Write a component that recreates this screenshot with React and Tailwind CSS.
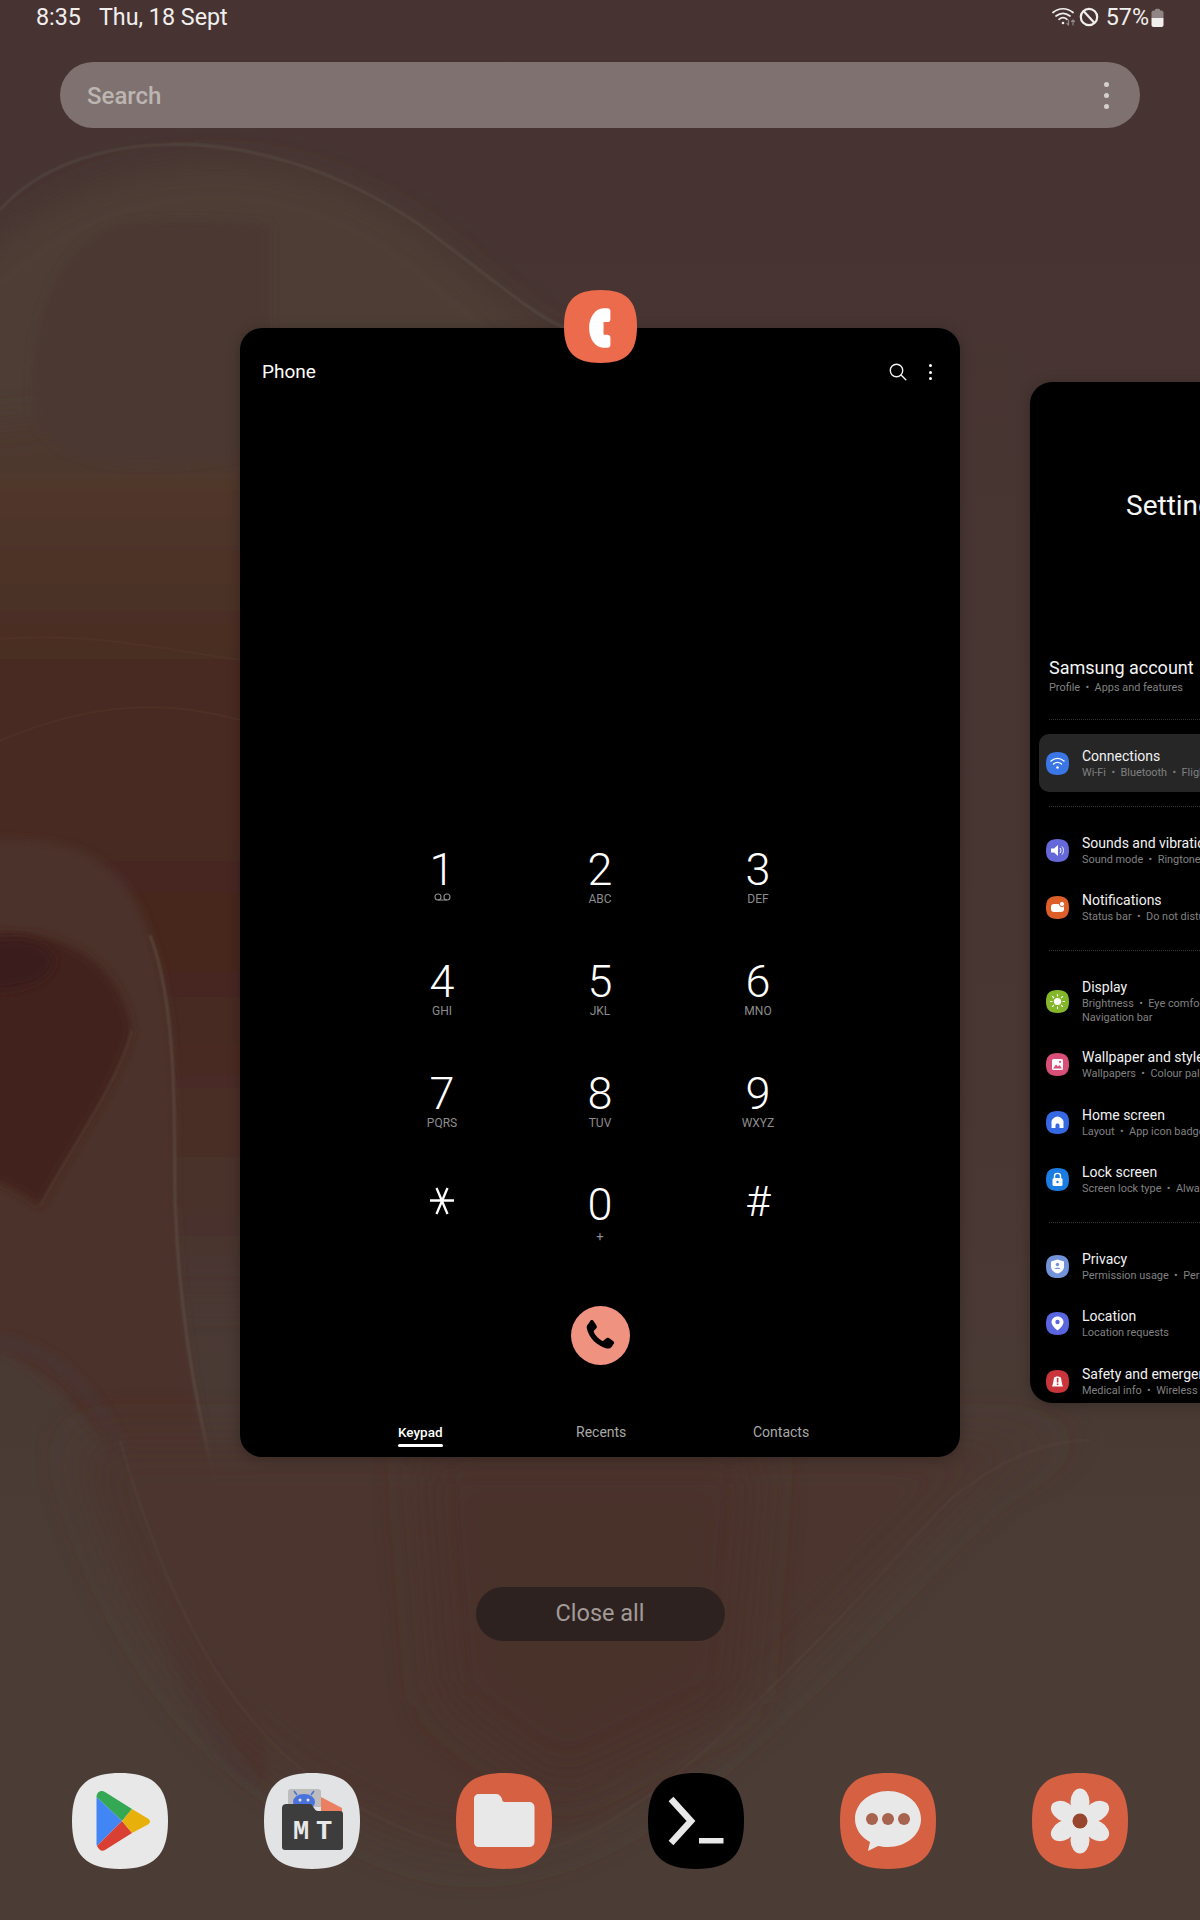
import React from "react";

const roboto = "font-['Roboto',sans-serif]";
const SQ = "M48 0C82 0 96 14 96 48C96 82 82 96 48 96C14 96 0 82 0 48C0 14 14 0 48 0Z";

function Wallpaper() {
  return (
    <svg className="absolute inset-0" width="1200" height="1920" viewBox="0 0 1200 1920">
      <defs>
        <linearGradient id="base" x1="0" y1="0" x2="0" y2="1">
          <stop offset="0" stopColor="#473432" />
          <stop offset="0.6" stopColor="#493733" />
          <stop offset="0.85" stopColor="#4b3d36" />
          <stop offset="1" stopColor="#4b3d36" />
        </linearGradient>
        <linearGradient id="red" x1="0" y1="0" x2="0" y2="1">
          <stop offset="0" stopColor="#4e3a31" />
          <stop offset="0.12" stopColor="#4f362b" />
          <stop offset="0.3" stopColor="#4a2c22" />
          <stop offset="0.62" stopColor="#46271f" />
          <stop offset="0.85" stopColor="#4a3029" />
          <stop offset="1" stopColor="#493733" />
        </linearGradient>
        <filter id="b1" x="-20%" y="-20%" width="140%" height="140%"><feGaussianBlur stdDeviation="24" /></filter>
        <filter id="b2" x="-20%" y="-20%" width="140%" height="140%"><feGaussianBlur stdDeviation="5" /></filter>
        <filter id="b3" x="-20%" y="-20%" width="140%" height="140%"><feGaussianBlur stdDeviation="1" /></filter>
        <filter id="b4" x="-20%" y="-20%" width="140%" height="140%"><feGaussianBlur stdDeviation="16" /></filter>
      </defs>
      <rect width="1200" height="1920" fill="url(#base)" />
      <path d="M-60 300C100 120 310 140 440 250C520 320 560 350 590 350L590 520L240 500L-60 520Z" fill="#4d3d35" filter="url(#b4)" />
      <path d="M-60 430L240 400L640 560L640 1300L240 1300L-60 1300Z" fill="url(#red)" filter="url(#b4)" />
      <path d="M33 415C25 320 60 240 120 225C180 215 270 225 270 225V450C170 470 60 480 33 415Z" fill="#4c3833" filter="url(#b2)" />
      <path d="M-10 640C80 630 170 650 240 660M-10 745C90 700 170 700 240 720" fill="none" stroke="#56382b" strokeWidth="2" strokeOpacity="0.45" />
      <path d="M-20 840C60 835 125 850 150 935C175 1000 175 1100 175 1200C180 1350 210 1480 250 1600L270 1790C210 1730 170 1630 150 1510C100 1420 40 1365 -20 1340Z" fill="#4c3329" filter="url(#b2)" />
      <path d="M-20 935C60 925 120 960 132 1030C120 1080 70 1150 40 1206C25 1195 0 1180 -20 1175Z" fill="#43231a" filter="url(#b2)" />
      <path d="M-20 945C25 930 50 945 55 960C50 985 20 990 -20 992Z" fill="#3a1f1c" filter="url(#b2)" />
      <path d="M150 935C175 1000 175 1100 175 1200C180 1350 210 1480 250 1600" fill="none" stroke="#675c4d" strokeWidth="2.5" strokeOpacity="0.5" filter="url(#b3)" />
      <path d="M132 1030C120 1080 70 1150 40 1206" fill="none" stroke="#5a4839" strokeWidth="2" strokeOpacity="0.5" filter="url(#b3)" />
      <path d="M-10 1340C60 1345 110 1400 145 1510C155 1600 190 1720 250 1780" fill="none" stroke="#4a3536" strokeWidth="9" filter="url(#b2)" />
      <path d="M76 1440C110 1570 170 1700 300 1785C380 1835 440 1860 500 1850C640 1840 780 1680 960 1500C1020 1440 1080 1440 1100 1440Z" fill="#4b342d" filter="url(#b1)" />
      <path d="M420 1450H760L740 1700L560 1790L440 1700Z" fill="#49312c" filter="url(#b1)" />
      <g fill="none" strokeWidth="2">
        <path d="M0 210C70 130 250 110 420 225C500 285 540 320 570 330" stroke="#66675a" strokeOpacity="0.4" filter="url(#b3)" />
        <path d="M120 1440C160 1580 220 1720 330 1790C420 1845 480 1860 540 1850C650 1830 800 1660 950 1500C1010 1450 1060 1440 1090 1440" stroke="#5f4d44" strokeOpacity="0.3" filter="url(#b3)" />
      </g>
    </svg>
  );
}

function StatusBar() {
  return (
    <div className="h-[34px] pl-9 pr-9 flex items-center justify-between text-[23.3px] text-[#f1eeee]">
      <div className="flex items-center gap-[18px]">
        <span>8:35</span>
        <span>Thu, 18 Sept</span>
      </div>
      <div className="flex items-center">
        <svg width="24" height="20" viewBox="0 0 24 20" fill="none" stroke="#f1eeee" strokeWidth="1.7" strokeLinecap="round">
          <path d="M1 5.5C7 0.5 15 0.5 21 5.5" />
          <path d="M4 9C8.5 5.5 13.5 5.5 18 9" />
          <path d="M7 12.3C9.5 10.3 12.5 10.3 15 12.3" />
          <circle cx="11" cy="16" r="1.3" fill="#f1eeee" stroke="none" />
          <path d="M16.5 13V18M15 16.5L16.5 18M21 18V13M19.5 14.5L21 13M22.5 14.5L21 13" stroke="#908886" strokeWidth="1.2" />
        </svg>
        <svg className="ml-[3px]" width="20" height="20" viewBox="0 0 20 20" fill="none" stroke="#f1eeee" strokeWidth="2.2">
          <circle cx="10" cy="10" r="8.2" />
          <path d="M4.5 4L15.5 16" />
        </svg>
        <span className="ml-[7px]">57%</span>
        <svg className="ml-[2px]" width="13" height="20" viewBox="0 0 13 20">
          <path d="M4 2.5C4 1.5 9 1.5 9 2.5V3.5H10.5C11.5 3.5 12.5 4.5 12.5 5.5V11H0.5V5.5C0.5 4.5 1.5 3.5 2.5 3.5H4Z" fill="#8f8584" />
          <path d="M0.5 11H12.5V18C12.5 19 11.5 20 10.5 20H2.5C1.5 20 0.5 19 0.5 18Z" fill="#f1eeee" />
        </svg>
      </div>
    </div>
  );
}

function SearchBar() {
  return (
    <div className="mt-7 mx-[60px] h-[66px] rounded-[33px] bg-[#ffffff]/30 flex items-center justify-between pl-[27px] pr-[31px]">
      <span className="pt-[2px] text-[24px] font-medium text-[#bdb5b2]">Search</span>
      <div className="flex flex-col gap-[6px]">
        <span className="w-[5px] h-[5px] rounded-full bg-[#d5d0ce]" />
        <span className="w-[5px] h-[5px] rounded-full bg-[#d5d0ce]" />
        <span className="w-[5px] h-[5px] rounded-full bg-[#d5d0ce]" />
      </div>
    </div>
  );
}

function Key({ n, sub }) {
  return (
    <div className="h-[112px] flex flex-col items-center">
      <div className="h-[50px] pt-[7px] text-[45px] leading-[43px] font-light text-white">{n}</div>
      <div className="h-[16px] leading-[16px] text-[12px] text-[#8c8c8c]">{sub}</div>
    </div>
  );
}

function PhoneCard() {
  const keys = [
    ["2", "ABC"], ["3", "DEF"],
    ["4", "GHI"], ["5", "JKL"], ["6", "MNO"],
    ["7", "PQRS"], ["8", "TUV"], ["9", "WXYZ"],
  ];
  return (
    <div className="relative shrink-0 w-[720px] h-[1129px] ml-[240px] bg-black rounded-[22px] shadow-[0_2px_14px_rgba(0,0,0,0.25)] flex flex-col">
      <div className="flex items-center justify-between h-[88px] pl-[22px] pr-[28px] text-white">
        <span className="text-[19px]">Phone</span>
        <div className="flex items-center gap-[22px]">
          <svg width="18" height="18" viewBox="0 0 18 18" fill="none" stroke="#f2f2f2" strokeWidth="1.4" strokeLinecap="round">
            <circle cx="7.5" cy="7.5" r="6.2" />
            <path d="M12 12L16.8 16.8" />
          </svg>
          <div className="flex flex-col gap-[3.5px]">
            <span className="w-[3px] h-[3px] rounded-full bg-white" />
            <span className="w-[3px] h-[3px] rounded-full bg-white" />
            <span className="w-[3px] h-[3px] rounded-full bg-white" />
          </div>
        </div>
      </div>
      <div className="mt-[425px] ml-[123px] grid grid-cols-3 w-[474px]">
        <Key n="1" sub={
          <svg className="mt-[2px]" width="17" height="8" viewBox="0 0 17 8" fill="none" stroke="#8c8c8c" strokeWidth="1.1">
            <circle cx="4" cy="4" r="3" /><circle cx="13" cy="4" r="3" /><path d="M4 7H13" />
          </svg>
        } />
        {keys.map(([n, s]) => <Key key={n} n={n} sub={s} />)}
        <div className="h-[112px] flex flex-col items-center">
          <svg className="mt-[9px]" width="26" height="30" viewBox="0 0 26 30" fill="none" stroke="#fff" strokeWidth="2.3">
            <path d="M1 14.5H25M7.5 2L18.5 28M18.5 2L7.5 28" />
          </svg>
        </div>
        <div className="h-[112px] flex flex-col items-center">
          <div className="h-[50px] pt-[6px] text-[45px] leading-[44px] font-light text-white">0</div>
          <div className="mt-[2px] h-[16px] leading-[16px] text-[13px] text-[#8c8c8c]">+</div>
        </div>
        <div className="h-[112px] flex flex-col items-center">
          <div className="h-[58px] text-[43px] leading-[48px] font-light text-white">#</div>
        </div>
      </div>
      <div className="mt-[17px] flex justify-center">
        <div className="w-[59px] h-[59px] rounded-full bg-[#f09280] flex items-center justify-center">
          <svg width="42" height="42" viewBox="0 0 24 24" fill="#000">
            <path d="M6.6 3.2c.6-.5 1.4-.3 1.8.3l1.6 2.5c.3.5.3 1.1-.1 1.5L8.6 8.9c-.2.3-.3.6-.1 1 .9 2 2.6 3.8 4.6 4.8.4.2.7.1 1-.1l1.5-1.3c.4-.4 1-.4 1.5-.1l2.4 1.6c.6.4.8 1.2.3 1.8l-1.1 1.5c-.7.9-1.8 1.3-2.9 1-5.6-1.4-9.9-5.7-11.3-11.2-.3-1.1.1-2.2.9-2.9Z" />
          </svg>
        </div>
      </div>
      <div className="relative mt-[56px] h-[22px] text-[14px] text-[#a8a8a8] flex items-center">
        <div className="absolute left-[158px] text-[13.5px] font-medium text-white">
          Keypad
          <div className="absolute left-0 right-0 top-[22px] h-[3px] rounded-sm bg-white" />
        </div>
        <div className="absolute left-[336px]">Recents</div>
        <div className="absolute left-[513px]">Contacts</div>
      </div>
      <div className="absolute left-[323.5px] top-[-38px]">
        <svg width="73" height="73" viewBox="0 0 96 96">
          <path d={SQ} fill="#ed6b4d" />
          <path d="M52 24H57C59.5 24 61 25.5 61 28V38C61 41 59.5 42 57 42H52V59H57C59.5 59 61 60 61 63V72C61 74.5 59.5 76 57 76H52C41 76 33 64 33 50C33 36 41 24 52 24Z" fill="#fff" />
        </svg>
      </div>
    </div>
  );
}

function Ic({ color, children }) {
  return (
    <svg className="shrink-0" width="23" height="23" viewBox="0 0 23 23">
      <path d="M11.5 0C19.5 0 23 3.5 23 11.5C23 19.5 19.5 23 11.5 23C3.5 23 0 19.5 0 11.5C0 3.5 3.5 0 11.5 0Z" fill={color} />
      {children}
    </svg>
  );
}

function Row({ icon, title, sub, sub2, className = "pl-[16px]" }) {
  return (
    <div className={`flex items-center gap-[13px] ${className}`}>
      {icon}
      <div className="whitespace-pre">
        <div className="text-[14px] leading-[18px] text-[#f2f2f2]">{title}</div>
        <div className="text-[10.9px] leading-[14px] text-[#808080] mt-[1px]">{sub}</div>
        {sub2 && <div className="text-[10.9px] leading-[13px] text-[#808080]">{sub2}</div>}
      </div>
    </div>
  );
}

function Dots({ className = "" }) {
  return <div className={`ml-[19px] border-t border-dotted border-[#333333] ${className}`} />;
}

function SettingsCard() {
  return (
    <div className="shrink-0 w-[720px] h-[1021px] mt-[54px] ml-[70px] bg-black rounded-[22px] overflow-hidden shadow-[0_2px_14px_rgba(0,0,0,0.25)] whitespace-pre">
      <div className="pl-[96px] pt-[105px] text-[28px] leading-[38px] text-[#f5f5f5]">Settings</div>
      <div className="pl-[19px] mt-[131px]">
        <div className="text-[18px] leading-[24px] text-[#f5f5f5]">Samsung account</div>
        <div className="text-[10.9px] leading-[14px] text-[#808080] mt-[1px]">Profile  •  Apps and features</div>
      </div>
      <Dots className="mt-[24px]" />
      <div className="ml-[9px] mt-[14px] h-[58px] rounded-[10px] bg-[#262626] flex items-center">
        <Row className="pl-[7px]" icon={<Ic color="#3a76e6"><g fill="none" stroke="#fff" strokeWidth="1.4" strokeLinecap="round"><path d="M5 9C9 5.8 14 5.8 18 9" /><path d="M7.5 12C10 10 13 10 15.5 12" /></g><circle cx="11.5" cy="15.5" r="1.3" fill="#fff" /></Ic>}
          title="Connections" sub="Wi-Fi  •  Bluetooth  •  Flight mode" />
      </div>
      <Dots className="mt-[14px]" />
      <Row className="pl-[16px] mt-[27px]" icon={<Ic color="#6468d8"><path d="M5 9.5H8L12 6V17L8 13.5H5Z" fill="#fff" /><path d="M14 9C15.2 10.5 15.2 12.5 14 14M16 7.5C18 10 18 13 16 15.5" fill="none" stroke="#fff" strokeWidth="1" /></Ic>}
        title="Sounds and vibration" sub="Sound mode  •  Ringtone" />
      <Row className="pl-[16px] mt-[24px]" icon={<Ic color="#dd5e28"><rect x="5" y="8" width="13" height="8" rx="3" fill="#fff" /><circle cx="16" cy="8" r="2.6" fill="#fff" stroke="#dd5e28" strokeWidth="1" /></Ic>}
        title="Notifications" sub="Status bar  •  Do not disturb" />
      <Dots className="mt-[26px]" />
      <Row className="pl-[16px] mt-[27px]" icon={<Ic color="#84b82a"><circle cx="11.5" cy="11.5" r="3.6" fill="#fff" /><g stroke="#fff" strokeWidth="1.1" strokeLinecap="round"><path d="M11.5 4.5V6M11.5 17V18.5M4.5 11.5H6M17 11.5H18.5M6.5 6.5L7.6 7.6M15.4 15.4L16.5 16.5M6.5 16.5L7.6 15.4M15.4 7.6L16.5 6.5" /></g></Ic>}
        title="Display" sub="Brightness  •  Eye comfort shield" sub2="Navigation bar" />
      <Row className="pl-[16px] mt-[24px]" icon={<Ic color="#d94f78"><rect x="6" y="6" width="11" height="11" rx="1.5" fill="#fff" /><path d="M7 15.5L10 11.5L12 13.5L13.5 12L16 15.5Z" fill="#d94f78" /><circle cx="14" cy="8.8" r="1.1" fill="#d94f78" /></Ic>}
        title="Wallpaper and style" sub="Wallpapers  •  Colour palette" />
      <Row className="pl-[16px] mt-[25px]" icon={<Ic color="#3569e4"><path d="M5.5 17V10.5C5.5 8.5 9 5.5 11.5 5.5C14 5.5 17.5 8.5 17.5 10.5V17H13.5V14C13.5 13 12.5 12.4 11.5 12.4C10.5 12.4 9.5 13 9.5 14V17Z" fill="#fff" /></Ic>}
        title="Home screen" sub="Layout  •  App icon badges" />
      <Row className="pl-[16px] mt-[24px]" icon={<Ic color="#1b7de2"><path d="M8.5 10V8C8.5 4.5 14.5 4.5 14.5 8V10" fill="none" stroke="#fff" strokeWidth="1.4" /><rect x="6.5" y="10" width="10" height="8" rx="1.5" fill="#fff" /><circle cx="11.5" cy="14" r="1.2" fill="#1b7de2" /></Ic>}
        title="Lock screen" sub="Screen lock type  •  Always On Display" />
      <Dots className="mt-[26px]" />
      <Row className="pl-[16px] mt-[27px]" icon={<Ic color="#7292da"><path d="M11.5 4.5L18 6.5V11.5C18 15 15 17.5 11.5 18.5C8 17.5 5 15 5 11.5V6.5Z" fill="#fff" /><circle cx="11.5" cy="9.5" r="1.7" fill="#7292da" /><path d="M8.5 14C9 12.3 14 12.3 14.5 14Z" fill="#7292da" /></Ic>}
        title="Privacy" sub="Permission usage  •  Permission manager" />
      <Row className="pl-[16px] mt-[24px]" icon={<Ic color="#5a65e0"><path d="M11.5 4.5C15 4.5 17.5 7 17.5 10C17.5 13.5 13.5 17 11.5 18.5C9.5 17 5.5 13.5 5.5 10C5.5 7 8 4.5 11.5 4.5Z" fill="#fff" /><circle cx="11.5" cy="10" r="2.2" fill="#5a65e0" /></Ic>}
        title="Location" sub="Location requests" />
      <Row className="pl-[16px] mt-[25px]" icon={<Ic color="#c9353a"><path d="M6 16.5C7 15 7.5 10 8 8C8.5 6 14.5 6 15 8C15.5 10 16 15 17 16.5Z" fill="#fff" /><rect x="10.8" y="8" width="1.6" height="4.5" fill="#c9353a" /><rect x="10.8" y="13.5" width="1.6" height="1.6" fill="#c9353a" /></Ic>}
        title="Safety and emergency" sub="Medical info  •  Wireless emergency alerts" />
    </div>
  );
}

function AppIcon({ children, fill }) {
  return (
    <svg className="shrink-0" width="96" height="96" viewBox="0 0 96 96">
      <path d={SQ} fill={fill} />
      {children}
    </svg>
  );
}

function Dock() {
  const petals = [0, 60, 120, 180, 240, 300];
  return (
    <div className="mt-[132px] pl-[71.5px] flex gap-[96px]">
      <AppIcon fill="#e8e8e8">
        <path d="M24.5 24C24.5 19 29 16.5 33 19L60 36L50 48Z" fill="#34a853" />
        <path d="M24.5 24L50 48L25 73C24.7 72.5 24.5 72 24.5 71Z" fill="#4285f4" />
        <path d="M50 48L60 60L33 77C30 79 27 77 25 73Z" fill="#d93f33" />
        <path d="M60 36L75 45C79 47 79 50 75 52L60 60L50 48Z" fill="#e8b00a" />
      </AppIcon>
      <AppIcon fill="#e1e3e5">
        <path d="M24 19C24 17 25 16 27 16H54C56 16 57 17 57 19V34H24Z" fill="#bdbdbd" />
        <path d="M57 24L78 35V44H57Z" fill="#ea7f62" />
        <g fill="#4a72dc">
          <ellipse cx="40" cy="29" rx="11" ry="8" />
          <path d="M33 22L30 18M47 22L50 18" stroke="#4a72dc" strokeWidth="1.6" />
        </g>
        <path d="M18 35C18 32 20 31 22 31H46C49 31 50 38 54 38H76C78 38 79 39 79 41V74C79 76 78 77 76 77H21C19 77 18 76 18 74Z" fill="#3d3d3d" />
        <circle cx="36" cy="27" r="1.5" fill="#e1e3e5" /><circle cx="44" cy="27" r="1.5" fill="#e1e3e5" />
        <text x="37" y="66" textAnchor="middle" fontFamily="Liberation Mono, monospace" fontWeight="700" fontSize="27" fill="#e8e8e8">M</text>
        <text x="60" y="66" textAnchor="middle" fontFamily="Liberation Mono, monospace" fontWeight="700" fontSize="27" fill="#e8e8e8">T</text>
      </AppIcon>
      <AppIcon fill="#d66042">
        <path d="M18 26C18 23 20 21 23 21H40C43 21 45 23 46 26C46 28 47 29 49 29H73C76 29 78.5 31 78.5 34V69C78.5 72 76 74 73 74H23C20 74 18 72 18 69Z" fill="#e8e8e8" />
      </AppIcon>
      <AppIcon fill="#000">
        <path d="M23 26L43 48L23 70" fill="none" stroke="#e8e8e8" strokeWidth="6.5" />
        <rect x="51" y="65" width="24.5" height="5.5" fill="#e8e8e8" />
      </AppIcon>
      <AppIcon fill="#d66042">
        <path d="M48 18C66 18 81 30 81 46C81 62 66 74 48 74C44 74 41 73.5 38 73L28 78L30 69C21 64 15 56 15 46C15 30 30 18 48 18Z" fill="#e8e8e8" />
        <circle cx="32" cy="46" r="6" fill="#a8634f" />
        <circle cx="48" cy="46" r="6" fill="#a8634f" />
        <circle cx="64" cy="46" r="6" fill="#a8634f" />
      </AppIcon>
      <AppIcon fill="#d66042">
        {petals.map((a) => (
          <ellipse key={a} cx="48" cy="29" rx="9.5" ry="13.5" fill="#e8e8e8" transform={`rotate(${a} 48 48)`} />
        ))}
        <circle cx="48" cy="48" r="7.5" fill="#984530" />
      </AppIcon>
    </div>
  );
}

export default function App() {
  return (
    <div className={`relative w-[1200px] h-[1920px] overflow-hidden bg-[#483533] ${roboto}`}>
      <Wallpaper />
      <div className="relative flex flex-col h-full">
        <StatusBar />
        <SearchBar />
        <div className="mt-[200px] flex items-start">
          <PhoneCard />
          <SettingsCard />
        </div>
        <div className="mt-[130px] flex justify-center">
          <div className="w-[249px] h-[54px] rounded-[27px] bg-[#2d2220] flex items-center justify-center text-[23.5px] text-[#a39b98]">Close all</div>
        </div>
        <Dock />
      </div>
    </div>
  );
}
